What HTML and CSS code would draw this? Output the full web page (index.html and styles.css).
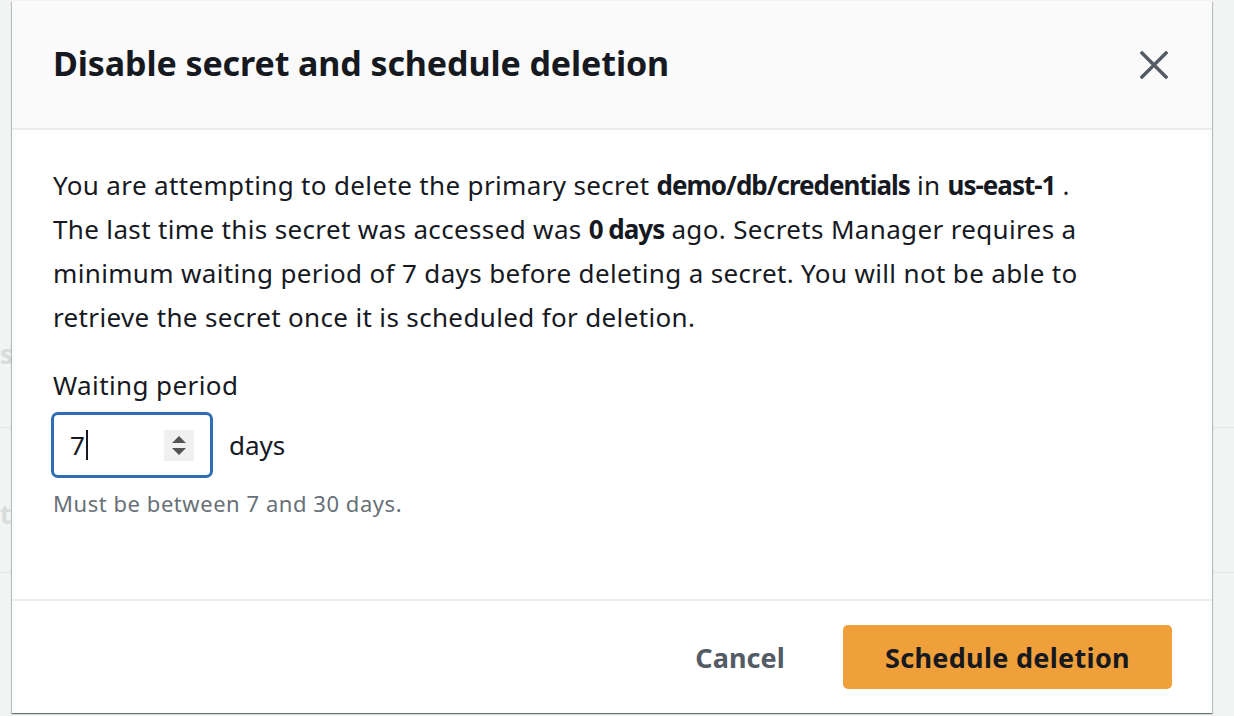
FILE: index.html
```html
<!DOCTYPE html>
<html lang="en">
<head>
<meta charset="utf-8">
<title>Disable secret and schedule deletion</title>
<link rel="stylesheet" href="styles.css">
</head>
<body>
<div class="backdrop">
  <div class="bg-text bg-s">s</div>
  <div class="bg-line bg-line-1"></div>
  <div class="bg-text bg-t">t</div>
  <div class="bg-line bg-line-2"></div>
</div>
<div class="modal">
  <header class="modal-header">
    <h1 class="modal-title">Disable secret and schedule deletion</h1>
    <button class="close" aria-label="Close">
      <svg width="28" height="28" viewBox="0 0 28 28"><path d="M2 2 L26 26 M26 2 L2 26" stroke="#545b64" stroke-width="3.4" stroke-linecap="square" fill="none"/></svg>
    </button>
  </header>
  <section class="modal-body">
    <p class="message">You are attempting to delete the primary secret <b>demo/db/credentials</b> in <b>us-east-1</b> .<br>The last time this secret was accessed was <b>0 days</b> ago. Secrets Manager requires a<br>minimum waiting period of 7 days before deleting a secret. You will not be able to<br>retrieve the secret once it is scheduled for deletion.</p>
    <div class="field">
      <label class="label">Waiting period</label>
      <div class="control-row">
        <div class="input">
          <span class="value">7</span><span class="caret"></span>
          <span class="spinner">
            <svg width="30" height="31" viewBox="0 0 30 31"><path d="M8 13 L15 6 L22 13 Z M8 18 L22 18 L15 25 Z" fill="#545454"/></svg>
          </span>
        </div>
        <span class="unit">days</span>
      </div>
      <div class="hint">Must be between 7 and 30 days.</div>
    </div>
  </section>
  <footer class="modal-footer">
    <button class="btn-link">Cancel</button>
    <button class="btn-primary">Schedule deletion</button>
  </footer>
</div>
</body>
</html>
```
FILE: styles.css
```css
html, body {
  margin: 0;
  padding: 0;
}
body {
  background: #f2f3f3;
  width: 1234px;
  height: 716px;
  overflow: hidden;
  position: relative;
  font-family: "Noto Sans", "Open Sans", sans-serif;
  color: #16191f;
}
.backdrop {
  position: absolute;
  inset: 0;
}
.bg-text {
  position: absolute;
  left: 0;
  font-size: 26px;
  font-weight: 700;
  color: #d9dcdc;
}
.bg-s { top: 336px; }
.bg-t { top: 496px; }
.bg-line {
  position: absolute;
  left: 0;
  right: 0;
  height: 1px;
  background: #e4e6e6;
}
.bg-line-1 { top: 427px; }
.bg-line-2 { top: 572px; }

.modal {
  position: absolute;
  left: 12px;
  top: 1px;
  width: 1200px;
  height: 712px;
  background: #fff;
  display: flex;
  flex-direction: column;
  box-shadow: 0 1px 1px 0 rgba(0, 28, 36, 0.35), 1px 1px 1px 0 rgba(0, 28, 36, 0.2), -1px 1px 1px 0 rgba(0, 28, 36, 0.2);
}
.modal-header {
  height: 127px;
  background: #fafafa;
  border-bottom: 2px solid #eaeded;
  display: flex;
  align-items: center;
  justify-content: space-between;
  padding: 0 41px;
  flex: none;
}
.modal-title {
  margin: 0;
  font-size: 34px;
  font-weight: 700;
  letter-spacing: -0.1px;
  padding-bottom: 4px;
}
.close {
  border: 0;
  background: none;
  padding: 0;
  margin-right: 3px;
  display: flex;
  margin-top: 0;
}
.modal-body {
  flex: 1;
  padding: 33px 41px 0;
}
.message {
  margin: 0;
  font-size: 26px;
  line-height: 44px;
  letter-spacing: 0.35px;
  white-space: nowrap;
}
.message b {
  font-weight: 700;
  letter-spacing: -1px;
}
.field {
  margin-top: 24px;
}
.label {
  display: block;
  font-size: 26px;
  letter-spacing: 0.4px;
  line-height: 44px;
}
.control-row {
  display: flex;
  align-items: center;
  gap: 16px;
  margin-top: 5px;
  margin-left: -2px;
}
.input {
  box-sizing: border-box;
  width: 162px;
  height: 66px;
  border: 3px solid #2f6db3;
  border-radius: 7px;
  display: flex;
  align-items: center;
  padding-left: 16px;
  padding-right: 16px;
  font-size: 26px;
}
.value { line-height: 1; }
.caret {
  width: 2px;
  height: 30px;
  background: #16191f;
  margin-left: 1px;
}
.spinner {
  margin-left: auto;
  width: 30px;
  height: 31px;
  background: #f0f0f0;
  display: flex;
}
.unit {
  font-size: 26px;
}
.hint {
  margin-top: 10px;
  font-size: 22px;
  letter-spacing: 0.55px;
  color: #687078;
}
.modal-footer {
  flex: none;
  height: 114px;
  border-top: 2px solid #eaeded;
  display: flex;
  align-items: center;
  justify-content: flex-end;
  gap: 58px;
  padding-right: 40px;
  box-sizing: border-box;
}
.btn-link {
  border: 0;
  background: none;
  font-family: inherit;
  font-size: 27px;
  letter-spacing: 0.1px;
  font-weight: 700;
  color: #545b64;
  padding: 0;
}
.btn-primary {
  border: 0;
  background: #f0a03b;
  border-radius: 5px;
  width: 329px;
  height: 64px;
  font-family: inherit;
  font-size: 27px;
  letter-spacing: 0.3px;
  font-weight: 700;
  color: #16191f;
  margin-top: 0;
}
```
